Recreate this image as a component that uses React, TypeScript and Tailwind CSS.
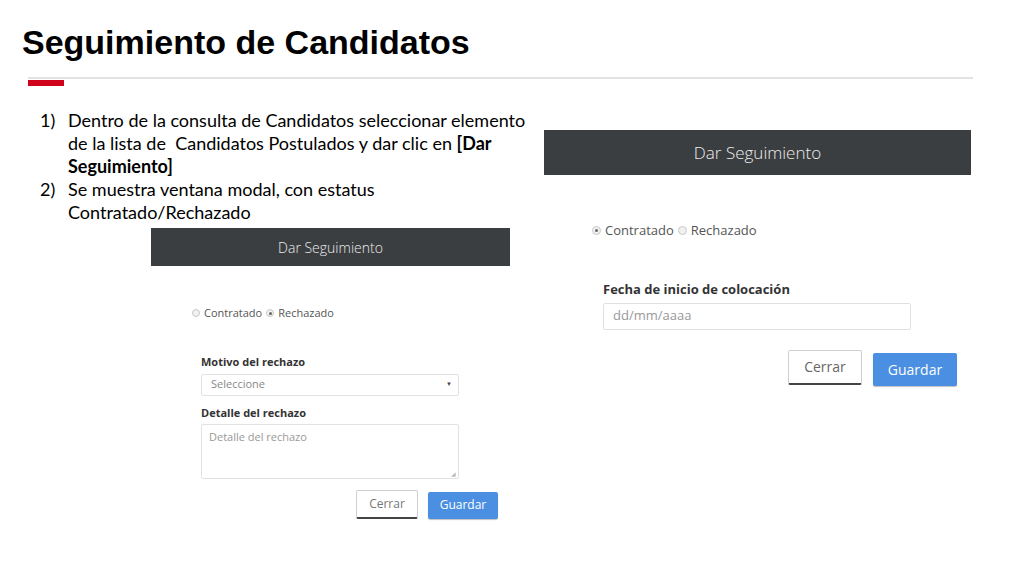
import type React from "react"

const Radio = ({ checked, size }: { checked: boolean; size: "sm" | "md" }) => (
  <span
    className={`inline-flex items-center justify-center rounded-full border border-[#c8c8c8] bg-[#f1f1f1] ${
      size === "md" ? "w-[9px] h-[9px]" : "w-[8px] h-[8px]"
    }`}
  >
    {checked && <span className="w-[3px] h-[3px] rounded-full bg-[#666]" />}
  </span>
)

const Header = ({ h, text }: { h: string; text: string }) => (
  <div className={`${h} bg-[#3b3e41] flex items-center justify-center`}>
    <span className={`${text} font-light text-[#ececec]`}>Dar Seguimiento</span>
  </div>
)

const App: React.FC = () => {
  return (
    <div className="w-[1024px] h-[576px] bg-white overflow-hidden font-['Open_Sans',sans-serif]">
      {/* titulo */}
      <div className="pt-[22px] pl-[22px]">
        <h1 className="text-[34px] leading-[40px] font-bold text-black font-['Liberation_Sans',Arial,sans-serif]">
          Seguimiento de Candidatos
        </h1>
      </div>
      <div className="ml-[28px] mt-[15px] w-[945px] h-[2px] bg-[#e3e3e3]" />
      <div className="ml-[28px] mt-[1px] w-[36px] h-[6px] bg-[#d0021b]" />

      <div className="flex">
        {/* columna izquierda */}
        <div className="w-[520px] shrink-0">
          <ol className="ml-[40px] mt-[23px] text-[18px] leading-[23px] text-black font-['Lato',sans-serif]">
            <li className="flex">
              <span className="w-[28px] shrink-0">1)</span>
              <span className="whitespace-nowrap">
                Dentro de la consulta de Candidatos seleccionar elemento
                <br />
                de la lista de&nbsp; Candidatos Postulados y dar clic en <b>[Dar</b>
                <br />
                <b>Seguimiento]</b>
              </span>
            </li>
            <li className="flex">
              <span className="w-[28px] shrink-0">2)</span>
              <span className="whitespace-nowrap">
                Se muestra ventana modal, con estatus
                <br />
                Contratado/Rechazado
              </span>
            </li>
          </ol>

          {/* modal rechazado */}
          <div className="ml-[151px] mt-[4px] w-[359px]">
            <Header h="h-[38px]" text="text-[14px]" />
            <div className="mt-[39px] pl-[41px] flex items-center gap-[4px] text-[11px] text-[#555]">
              <Radio checked={false} size="sm" />
              <span>Contratado</span>
              <Radio checked size="sm" />
              <span>Rechazado</span>
            </div>
            <div className="pl-[50px] pr-[51px] mt-[32px]">
              <div className="text-[11px] font-bold text-[#333] leading-[16px]">Motivo del rechazo</div>
              <div className="mt-[4px] h-[22px] border border-[#e2e2e2] rounded-[2px] flex items-center justify-between pl-[9px] pr-[6px] text-[11px] text-[#888]">
                <span>Seleccione</span>
                <span className="text-[6px] text-[#444]">▼</span>
              </div>
              <div className="mt-[9px] text-[11px] font-bold text-[#333] leading-[16px]">Detalle del rechazo</div>
              <div className="mt-[3px] h-[55px] border border-[#e2e2e2] rounded-[2px] pl-[7px] pt-[4px] text-[11px] text-[#999] relative">
                Detalle del rechazo
                <span className="absolute right-[2px] bottom-[1px] text-[6px] text-[#bbb] leading-none">◢</span>
              </div>
            </div>
            <div className="mt-[11px] flex justify-end items-start gap-[10px] pr-[12px]">
              <button className="w-[62px] h-[29px] bg-white border border-[#cfcfcf] border-b-2 border-b-[#444] rounded-[2px] text-[12px] text-[#777]">
                Cerrar
              </button>
              <button className="mt-[2px] w-[70px] h-[27px] bg-[#4a8fe2] rounded-[2px] text-[12px] text-white shadow-[0_1px_1px_rgba(0,0,0,0.25)]">
                Guardar
              </button>
            </div>
          </div>
        </div>

        {/* modal contratado */}
        <div className="ml-[24px] mt-[44px] w-[427px]">
          <Header h="h-[45px]" text="text-[17px]" />
          <div className="mt-[46px] pl-[48px] flex items-center gap-[4px] text-[13px] text-[#555]">
            <Radio checked size="md" />
            <span>Contratado</span>
            <Radio checked={false} size="md" />
            <span>Rechazado</span>
          </div>
          <div className="pl-[59px] mt-[39px]">
            <div className="text-[13px] font-bold text-[#333] leading-[18px]">Fecha de inicio de colocación</div>
            <div className="mt-[5px] w-[308px] h-[27px] border border-[#e0e0e0] rounded-[2px] flex items-center pl-[9px] text-[13px] text-[#999]">
              dd/mm/aaaa
            </div>
          </div>
          <div className="mt-[20px] flex justify-end items-start gap-[11px] pr-[14px]">
            <button className="w-[74px] h-[35px] bg-white border border-[#cfcfcf] border-b-2 border-b-[#444] rounded-[2px] text-[14px] text-[#666]">
              Cerrar
            </button>
            <button className="mt-[3px] w-[84px] h-[33px] bg-[#4a8fe2] rounded-[2px] text-[14px] text-white shadow-[0_1px_1px_rgba(0,0,0,0.25)]">
              Guardar
            </button>
          </div>
        </div>
      </div>
    </div>
  )
}

export default App
